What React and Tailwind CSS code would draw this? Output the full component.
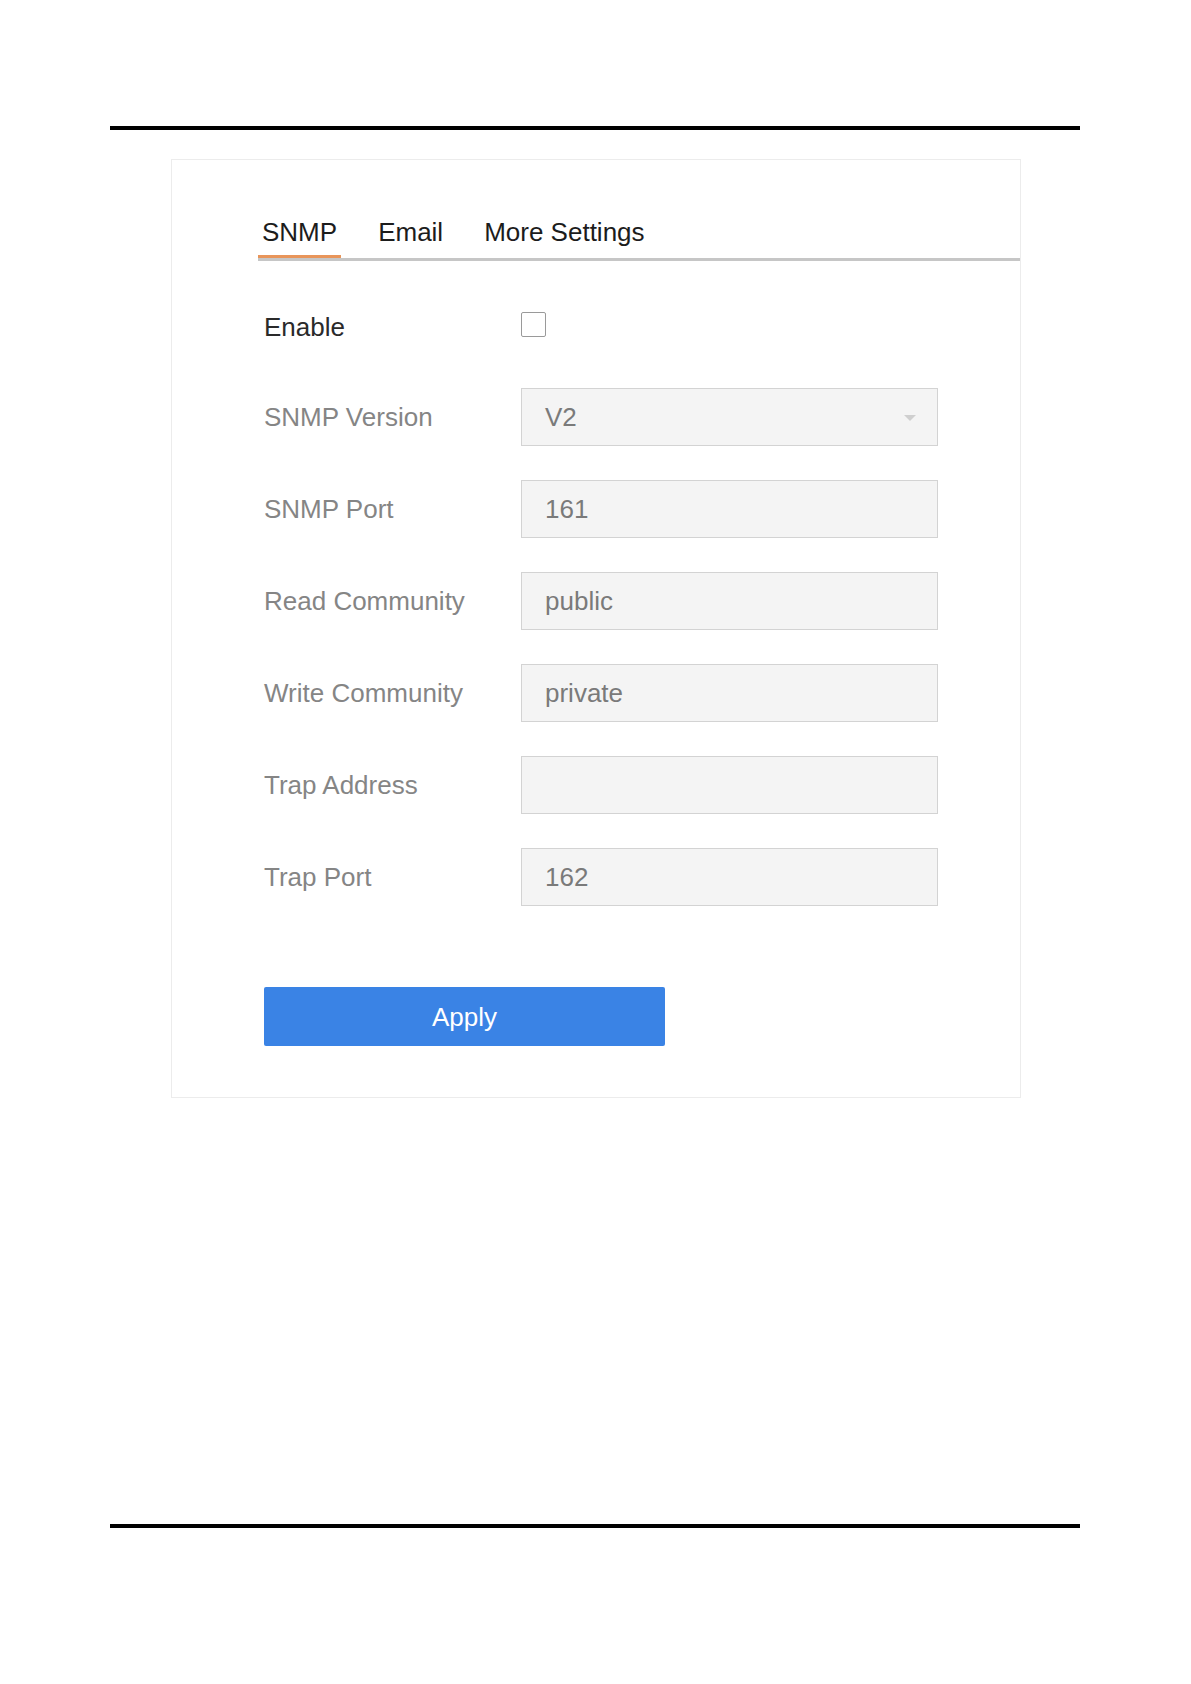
import React from 'react';

const fields = [
  { label: 'SNMP Version', value: 'V2', select: true },
  { label: 'SNMP Port', value: '161' },
  { label: 'Read Community', value: 'public' },
  { label: 'Write Community', value: 'private' },
  { label: 'Trap Address', value: '' },
  { label: 'Trap Port', value: '162' },
];

const tabs = ['SNMP', 'Email', 'More Settings'];

const Field = ({ label, value, select }) => (
  <div className="flex items-center">
    <span className="w-[257px] text-[26px] leading-[30px] text-[#858585]">{label}</span>
    <div className="flex items-center justify-between w-[417px] h-[58px] pl-[23px] pr-[21px] bg-[#f4f4f4] border-[1.5px] border-[#d3d3d3]">
      <span className="text-[26px] leading-[30px] text-[#7a7a7a]">{value}</span>
      {select && (
        <svg width="12" height="6" viewBox="0 0 12 6" className="mt-[1px]">
          <path d="M0 0 L12 0 L6 6 Z" fill="#cfcfcf" />
        </svg>
      )}
    </div>
  </div>
);

const App = () => {
  return (
    <div
      className="w-[1191px] h-[1684px] bg-white pt-[126px] pl-[110px]"
      style={{ fontFamily: '"Liberation Sans", Arial, sans-serif' }}
    >
      <div className="w-[970px] h-[4px] bg-black" />

      {/* settings card */}
      <div className="mt-[29px] ml-[61px] w-[850px] h-[939px] border border-[#ececec] pt-[57px]">
        <div className="ml-[86px] flex gap-[33px] border-b-[3px] border-[#c6c6c6]">
          {tabs.map((tab, i) => (
            <div
              key={tab}
              className={`px-[4px] pb-[8px] text-[26px] leading-[30px] text-[#1c1c1c] border-b-[3px] ${
                i === 0 ? 'border-[#e8955a]' : 'border-transparent'
              }`}
            >
              {tab}
            </div>
          ))}
        </div>

        <div className="pl-[92px] pt-[51px]">
          <div className="flex items-center h-[25px]">
            <span className="w-[257px] text-[26px] leading-[30px] text-[#2a2a2a] mt-[4px]">Enable</span>
            <div className="w-[25px] h-[25px] border-[1.5px] border-[#9a9a9a] rounded-[2px] bg-white" />
          </div>

          <div className="mt-[51px] flex flex-col gap-[34px]">
            {fields.map((f) => (
              <Field key={f.label} {...f} />
            ))}
          </div>

          <button
            type="button"
            className="mt-[81px] w-[401px] h-[59px] bg-[#3a83e5] rounded-[2px] text-white text-[26px] leading-[30px]"
          >
            Apply
          </button>
        </div>
      </div>

      <div className="mt-[426px] w-[970px] h-[4px] bg-black" />
    </div>
  );
};

export default App;
